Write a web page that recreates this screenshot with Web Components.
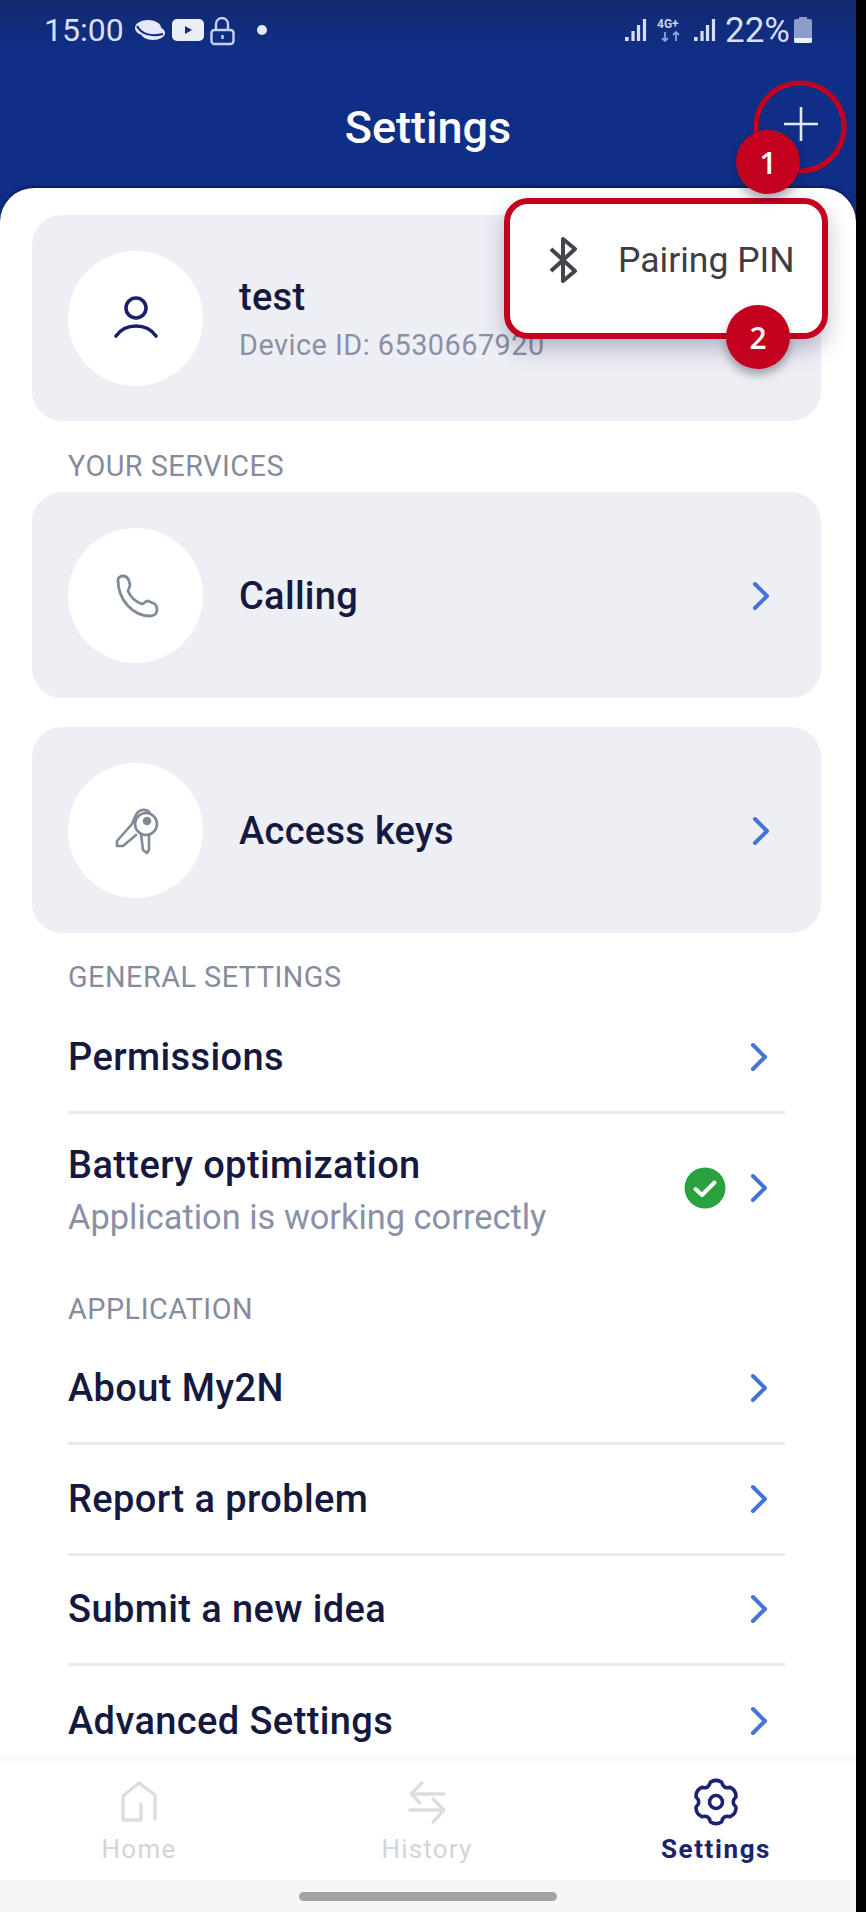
<!DOCTYPE html>
<html lang="en">
<head>
<meta charset="utf-8">
<title>Settings</title>
<style>
  html, body { margin: 0; background: #000; }
  body { font-family: Roboto, "Liberation Sans", sans-serif; }
</style>
</head>
<body>
<phone-screen>
  <app-header slot="header" heading="Settings"></app-header>

  <service-card heading="test" sub="Device ID: 6530667920" no-chevron>
    <svg slot="icon" width="60" height="60" viewBox="0 0 60 60" fill="none" stroke="#1b1f6b" stroke-width="3.6" stroke-linecap="round">
      <circle cx="30" cy="20" r="10"/>
      <path d="M10 48c5-7 13-10 20-10s15 3 20 10"/>
    </svg>
  </service-card>

  <section-label gap="20">YOUR SERVICES</section-label>
  <service-card heading="Calling">
    <svg slot="icon" width="60" height="60" viewBox="0 0 60 60" fill="none" stroke="#7f8a96" stroke-width="2.8" stroke-linejoin="round">
      <path d="M12 15C12 12 15 11 17 11C20 11 22 13 23 16L24 20C24 23 22 24 22 26C25 33 30 37 36 39C38 39 39 36 42 36L47 38C50 39 51 42 51 45C51 49 48 51 44 51C27 51 12 35 12 15Z"/>
    </svg>
  </service-card>
  <service-card heading="Access keys" spaced>
    <svg slot="icon" width="60" height="60" viewBox="0 0 60 60" fill="none" stroke="#7f8a96" stroke-width="2.6" stroke-linecap="round" stroke-linejoin="round">
      <path d="M44 13C41 9 35 9 32 12C29 15 28 20 26 24L11 41L11 46L17 46L30 35"/>
      <circle cx="40" cy="24" r="11"/>
      <path d="M35 34L37 50L41 53L43 50L43 35"/>
      <circle cx="41" cy="21" r="3" fill="#7f8a96"/>
    </svg>
  </service-card>

  <section-label gap="19">GENERAL SETTINGS</section-label>
  <list-row>Permissions</list-row>
  <list-row tall last>
    Battery optimization
    <span slot="sub">Application is working correctly</span>
    <svg slot="status" width="42" height="42" viewBox="0 0 42 42" fill="none">
      <circle cx="21" cy="21" r="20.5" fill="#2aa13f"/>
      <path d="M11.5 22l6.5 6 12.5-12.5" stroke="#fff" stroke-width="4" stroke-linecap="round" stroke-linejoin="round"/>
    </svg>
  </list-row>

  <section-label gap="16">APPLICATION</section-label>
  <list-row>About My2N</list-row>
  <list-row>Report a problem</list-row>
  <list-row>Submit a new idea</list-row>
  <list-row last>Advanced Settings</list-row>

  <bottom-nav slot="nav">
    <nav-item label="Home">
      <svg width="48" height="48" viewBox="0 0 48 48" fill="none" stroke="#dcdde0" stroke-width="3.4" stroke-linejoin="round" stroke-linecap="round">
        <path d="M9 42h17V26M8 42V18L24 5l16 12v24"/>
      </svg>
    </nav-item>
    <nav-item label="History">
      <svg width="48" height="48" viewBox="0 0 48 48" fill="none" stroke="#dcdde0" stroke-width="3.4" stroke-linejoin="round" stroke-linecap="round">
        <path d="M41 16H8M19 5L8 16l9 9M7 32h34M30 21l11 11-11 12"/>
      </svg>
    </nav-item>
    <nav-item label="Settings" active>
      <gear-icon></gear-icon>
    </nav-item>
  </bottom-nav>

  <pairing-popup slot="overlay"></pairing-popup>
  <step-badge slot="overlay" style="left:736px;top:130px">1</step-badge>
  <step-badge slot="overlay" style="left:726px;top:305px">2</step-badge>
</phone-screen>

<script>
class PhoneScreen extends HTMLElement {
  connectedCallback() {
    this.attachShadow({ mode: 'open' });
    this.shadowRoot.innerHTML = `
      <style>
        :host {
          display: flex;
          flex-direction: column;
          position: relative;
          width: 856px;
          height: 1912px;
          overflow: hidden;
          background: linear-gradient(#13296f 0, #0f2f86 50px);
          font-family: Roboto, "Liberation Sans", sans-serif;
          color: #15193f;
        }
        .sheet {
          flex: 1;
          min-height: 0;
          overflow: hidden;
          background: #fff;
          border-radius: 34px 34px 0 0;
          padding: 27px 35px 0 32px;
          box-shadow: 0 -2px 2px rgba(10, 22, 80, .7);
        }
      </style>
      <slot name="header"></slot>
      <div class="sheet"><slot></slot></div>
      <slot name="nav"></slot>
      <slot name="overlay"></slot>
    `;
  }
}
customElements.define('phone-screen', PhoneScreen);

class AppHeader extends HTMLElement {
  connectedCallback() {
    const signal = (style) => `<svg style="${style}" width="22" height="24" viewBox="0 0 24 24" preserveAspectRatio="none" fill="#d9dff7">
      <rect x="0" y="19" width="4" height="4"/><rect x="7" y="13" width="3.5" height="10"/><rect x="13" y="7" width="3.5" height="16"/><rect x="19.5" y="1" width="3.5" height="22"/>
    </svg>`;
    this.attachShadow({ mode: 'open' });
    this.shadowRoot.innerHTML = `
      <style>
        :host { display: block; height: 188px; color: #fff; flex: none; position: relative; }
        .status {
          display: flex;
          align-items: center;
          height: 60px;
          padding: 0 44px;
          color: #d9dff7;
          font-size: 32px;
        }
        .status svg { display: block; flex: none; }
        .right { margin-left: auto; display: flex; align-items: center; }
        .pct { font-size: 35px; margin-left: 9px; }
        .title {
          height: 128px;
          box-sizing: border-box;
          padding-top: 6px;
          display: flex;
          align-items: center;
          justify-content: center;
          font-size: 45px;
          font-weight: 500;
        }
        .plus { position: absolute; left: 783px; top: 106px; }
        .ring { position: absolute; left: 752px; top: 79px; }
      </style>
      <div class="status">
        <span>15:00</span>
        <svg style="margin-left:10px" width="32" height="24" viewBox="0 0 32 24">
          <ellipse cx="14" cy="10" rx="13" ry="8" fill="#e6e9f8"/>
          <ellipse cx="19" cy="15" rx="12" ry="7" fill="#e6e9f8"/>
          <path d="M3 8c4 8 14 11 26 8" fill="none" stroke="#0f2f86" stroke-width="2"/>
        </svg>
        <svg style="margin-left:6px" width="32" height="22" viewBox="0 0 32 22">
          <rect width="32" height="22" rx="5" fill="#eceef9"/>
          <path d="M13 7l7 4-7 4z" fill="#1b2d72"/>
        </svg>
        <svg style="margin-left:6px;margin-top:2px" width="25" height="29" viewBox="0 0 25 29" fill="none" stroke="#c9d0f5" stroke-width="2.4">
          <rect x="1.5" y="13" width="22" height="14" rx="3"/>
          <path d="M6 13V7a6 6 0 0 1 12 0v6"/>
          <path d="M12.5 18v4"/>
        </svg>
        <svg style="margin-left:22px" width="10" height="10" viewBox="0 0 10 10"><circle cx="5" cy="5" r="5" fill="#e6e9f8"/></svg>
        <div class="right">
          ${signal('')}
          <svg style="margin-left:10px" width="27" height="26" viewBox="0 0 27 26" fill="none">
            <text x="0" y="10.5" font-family="Roboto, sans-serif" font-size="12" font-weight="700" fill="#c9d0ee">4G+</text>
            <path d="M8 15v9M5 21l3 3 3-3" stroke="#8fa0d8" stroke-width="1.8"/>
            <path d="M19 24v-9M16 18l3-3 3 3" stroke="#8fa0d8" stroke-width="1.8"/>
          </svg>
          ${signal('margin-left:10px')}
          <span class="pct">22%</span>
          <svg style="margin-left:4px" width="18" height="26" viewBox="0 0 18 26">
            <path d="M5 0h8v2h3a2 2 0 0 1 2 2v20a2 2 0 0 1-2 2H2a2 2 0 0 1-2-2V4a2 2 0 0 1 2-2h3z" fill="#8d9cca"/>
            <path d="M0 21h18v3a2 2 0 0 1-2 2H2a2 2 0 0 1-2-2z" fill="#eef0fa"/>
          </svg>
        </div>
      </div>
      <div class="title">${this.getAttribute('heading')}</div>
      <svg class="plus" width="36" height="36" viewBox="0 0 36 36" stroke="#e4e8f8" stroke-width="2.6">
        <path d="M18 1v34M1 18h34"/>
      </svg>
      <svg class="ring" width="96" height="96" viewBox="0 0 96 96" fill="none">
        <circle cx="48" cy="48" r="44" stroke="#c4001f" stroke-width="5"/>
      </svg>
    `;
  }
}
customElements.define('app-header', AppHeader);

class ServiceCard extends HTMLElement {
  connectedCallback() {
    const sub = this.getAttribute('sub');
    const chevron = this.hasAttribute('no-chevron') ? '' :
      `<svg class="chev" width="18" height="30" viewBox="0 0 18 30" fill="none" stroke="#4673d9" stroke-width="4" stroke-linecap="round" stroke-linejoin="round"><path d="M3 3l12 12L3 27"/></svg>`;
    this.attachShadow({ mode: 'open' });
    this.shadowRoot.innerHTML = `
      <style>
        :host {
          display: flex;
          align-items: center;
          height: 206px;
          box-sizing: border-box;
          padding: 0 51px 0 36px;
          background: #eeeef5;
          border-radius: 30px;
        }
        :host([spaced]) { margin-top: 29px; }
        .circle {
          width: 135px;
          height: 135px;
          border-radius: 50%;
          background: #fff;
          display: flex;
          align-items: center;
          justify-content: center;
          flex: none;
        }
        .text { margin-left: 36px; margin-top: 2px; flex: 1; min-width: 0; }
        .name { font-size: 38px; font-weight: 500; line-height: 46px; letter-spacing: .3px; }
        .sub { font-size: 28.8px; line-height: 38px; color: #8a90a6; letter-spacing: .5px; margin-top: 6px; }
        .chev { flex: none; margin-top: 2px; }
      </style>
      <div class="circle"><slot name="icon"></slot></div>
      <div class="text">
        <div class="name">${this.getAttribute('heading')}</div>
        ${sub ? `<div class="sub">${sub}</div>` : ''}
      </div>
      ${chevron}
    `;
  }
}
customElements.define('service-card', ServiceCard);

class SectionLabel extends HTMLElement {
  connectedCallback() {
    this.attachShadow({ mode: 'open' });
    this.shadowRoot.innerHTML = `
      <style>
        :host {
          display: flex;
          align-items: center;
          height: 50px;
          padding-left: 36px;
          margin-top: ${this.getAttribute('gap') || 19}px;
          margin-bottom: 1px;
          font-size: 28.8px;
          letter-spacing: .5px;
          color: #868b9c;
        }
      </style>
      <slot></slot>
    `;
  }
}
customElements.define('section-label', SectionLabel);

class ListRow extends HTMLElement {
  connectedCallback() {
    this.attachShadow({ mode: 'open' });
    this.shadowRoot.innerHTML = `
      <style>
        :host {
          display: flex;
          align-items: center;
          height: 110.5px;
          box-sizing: border-box;
          margin: 0 36px;
          border-bottom: 3px solid #e9e9ec;
          font-size: 38px;
          font-weight: 500;
          letter-spacing: .4px;
        }
        :host([tall]) { height: 154px; }
        :host([last]) { border-bottom: 0; }
        .text { flex: 1; min-width: 0; line-height: 46px; }
        ::slotted([slot="sub"]) {
          display: block;
          margin-top: 6px;
          font-size: 34.4px;
          font-weight: 400;
          letter-spacing: 0;
          color: #8a90a6;
        }
        .status { margin-right: 24px; display: flex; }
        .chev { margin-right: 17px; flex: none; }
        :host([tall]) .status, :host([tall]) .chev { margin-bottom: 5px; }
      </style>
      <div class="text"><slot></slot><div><slot name="sub"></slot></div></div>
      <div class="status"><slot name="status"></slot></div>
      <svg class="chev" width="18" height="30" viewBox="0 0 18 30" fill="none" stroke="#4673d9" stroke-width="4" stroke-linecap="round" stroke-linejoin="round"><path d="M3 3l12 12L3 27"/></svg>
    `;
  }
}
customElements.define('list-row', ListRow);

class BottomNav extends HTMLElement {
  connectedCallback() {
    this.attachShadow({ mode: 'open' });
    this.shadowRoot.innerHTML = `
      <style>
        :host { display: block; flex: none; position: relative; }
        .items {
          display: grid;
          grid-template-columns: 278px 298px 280px;
          height: 125px;
          background: linear-gradient(#f9f9fa 0, #fff 14px);
        }
        .home-bar {
          height: 32px;
          background: #f5f5f7;
          display: flex;
          justify-content: center;
          align-items: center;
        }
        .home-bar div { width: 258px; height: 9px; border-radius: 5px; background: #a3a3a5; }
      </style>
      <div class="items"><slot></slot></div>
      <div class="home-bar"><div></div></div>
    `;
  }
}
customElements.define('bottom-nav', BottomNav);

class NavItem extends HTMLElement {
  connectedCallback() {
    this.attachShadow({ mode: 'open' });
    this.shadowRoot.innerHTML = `
      <style>
        :host {
          display: flex;
          flex-direction: column;
          align-items: center;
          padding-top: 23px;
          color: #d3d4d8;
          font-size: 26px;
          letter-spacing: 1.2px;
        }
        :host([active]) { color: #1b2270; font-weight: 700; letter-spacing: 1.6px; }
        .icon { height: 48px; display: flex; }
        .label { margin-top: 7px; line-height: 32px; }
      </style>
      <div class="icon"><slot></slot></div>
      <div class="label">${this.getAttribute('label')}</div>
    `;
  }
}
customElements.define('nav-item', NavItem);

class GearIcon extends HTMLElement {
  connectedCallback() {
    // six rounded lobes round a small ring
    let path = '';
    for (let k = 0; k < 6; k++) {
      const pt = (deg, r) => {
        const t = (k * 60 - 90 + deg) * Math.PI / 180;
        return `${(24 + r * Math.cos(t)).toFixed(1)} ${(24 + r * Math.sin(t)).toFixed(1)}`;
      };
      path += `${k ? 'L' : 'M'}${pt(-16, 20.5)}Q${pt(0, 23.5)} ${pt(16, 20.5)}Q${pt(30, 14.5)} ${pt(44, 20.5)}`;
    }
    this.attachShadow({ mode: 'open' });
    this.shadowRoot.innerHTML = `
      <style>:host { display: block; width: 48px; height: 48px; }</style>
      <svg width="48" height="48" viewBox="0 0 48 48" fill="none" stroke="#1b2270" stroke-width="3.6" stroke-linejoin="round">
        <path d="${path}Z"/>
        <circle cx="24" cy="24" r="6.5"/>
      </svg>
    `;
  }
}
customElements.define('gear-icon', GearIcon);

class PairingPopup extends HTMLElement {
  connectedCallback() {
    this.attachShadow({ mode: 'open' });
    this.shadowRoot.innerHTML = `
      <style>
        :host {
          position: absolute;
          left: 504px;
          top: 198px;
          width: 324px;
          height: 141px;
          box-sizing: border-box;
          display: flex;
          align-items: flex-start;
          padding: 33px 0 0 38px;
          background: #fff;
          border: 6px solid #c4001f;
          border-radius: 24px;
          box-shadow: 0 10px 22px rgba(30, 35, 70, .28);
          font-size: 35.5px;
          color: #3d3e44;
        }
        svg { flex: none; }
        span { margin-left: 40px; line-height: 46px; white-space: nowrap; }
      </style>
      <svg width="30" height="46" viewBox="0 0 30 46" fill="none" stroke="#44454b" stroke-width="4" stroke-linejoin="round">
        <path d="M3 12l24 22-12 10V2l12 10L3 34"/>
      </svg>
      <span>Pairing PIN</span>
    `;
  }
}
customElements.define('pairing-popup', PairingPopup);

class StepBadge extends HTMLElement {
  connectedCallback() {
    this.attachShadow({ mode: 'open' });
    this.shadowRoot.innerHTML = `
      <style>
        :host {
          position: absolute;
          width: 64px;
          height: 64px;
          display: flex;
          align-items: center;
          justify-content: center;
          border-radius: 50%;
          background: #c4001f;
          color: #fff;
          font-family: "Open Sans", sans-serif;
          font-size: 30px;
          font-weight: 600;
          box-shadow: 0 6px 10px rgba(20, 20, 40, .35);
        }
      </style>
      <slot></slot>
    `;
  }
}
customElements.define('step-badge', StepBadge);
</script>
</body>
</html>
